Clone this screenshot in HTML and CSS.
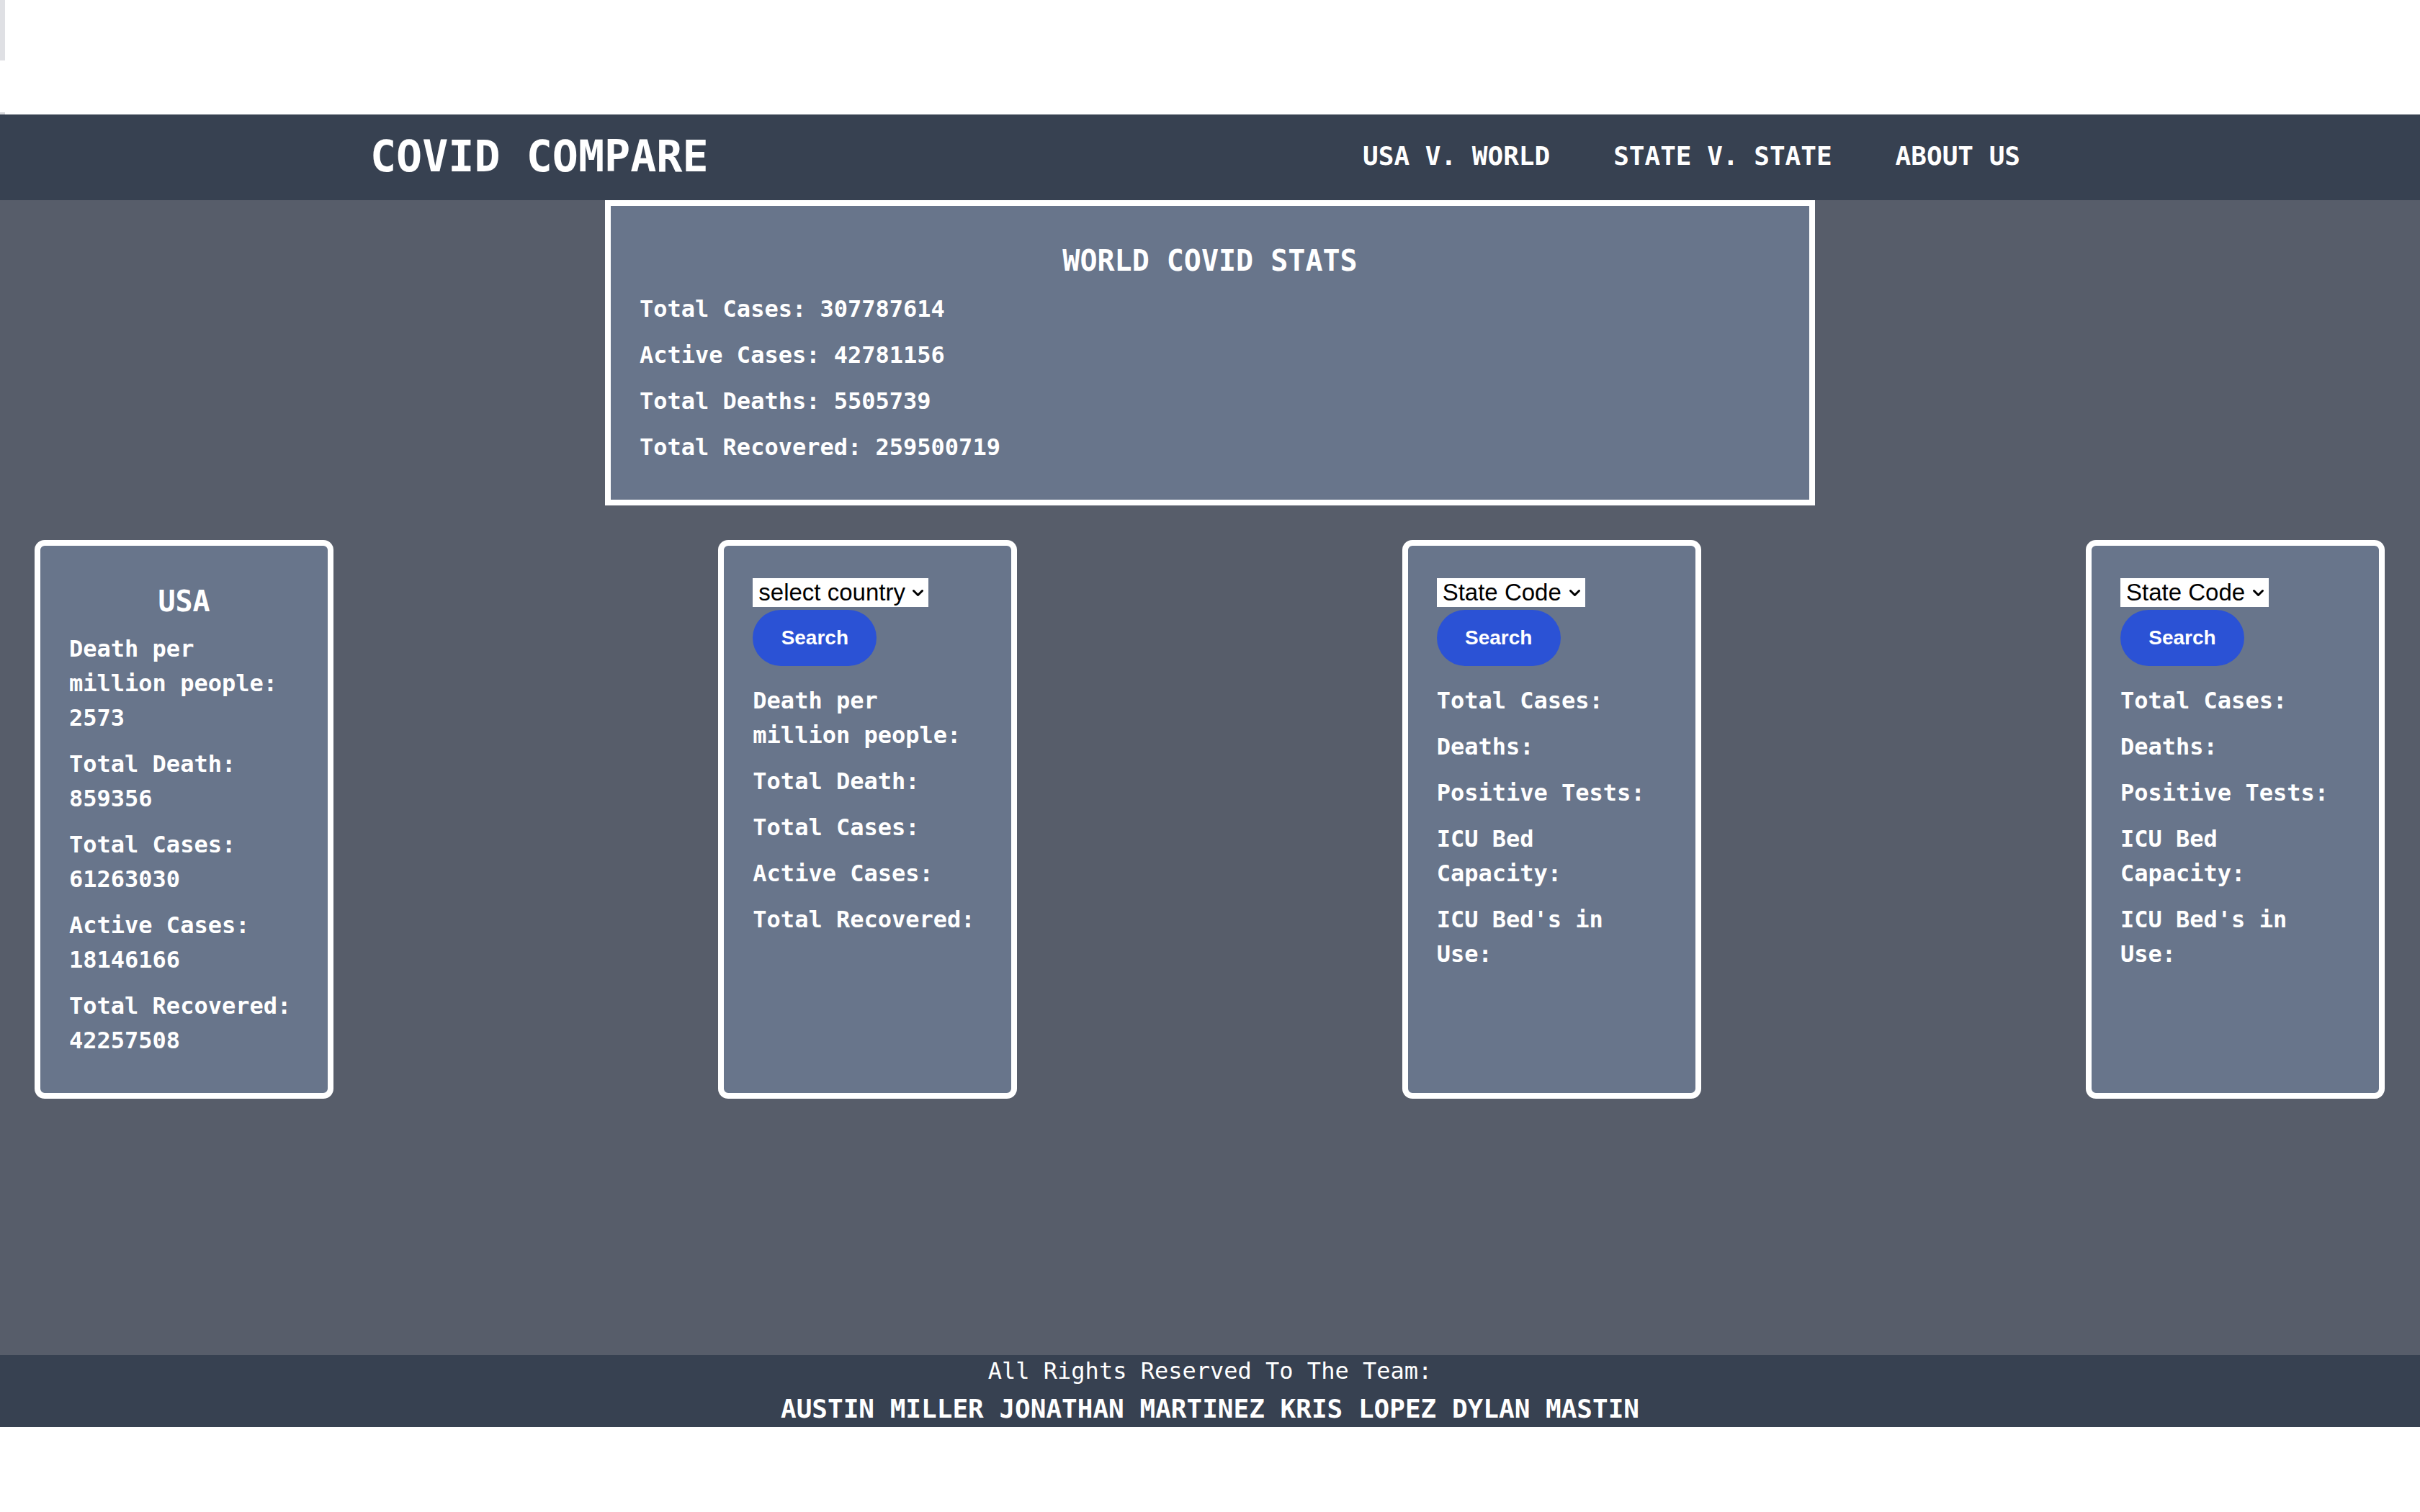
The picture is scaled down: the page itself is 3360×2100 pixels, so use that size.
FILE: index.html
```html
<!DOCTYPE html>
<html lang="en">
<head>
<meta charset="utf-8">
<title>Covid Compare</title>
<link rel="stylesheet" href="styles.css">
</head>
<body>
<div class="topbar">
  <span class="strip"></span>
  <span class="strip-small"></span>
</div>
<header class="site-header">
  <h1 class="brand">COVID COMPARE</h1>
  <nav class="nav">
    <a class="nav-link" href="#">USA V. WORLD</a>
    <a class="nav-link" href="#">STATE V. STATE</a>
    <a class="nav-link" href="#">ABOUT US</a>
  </nav>
</header>
<main class="main">
  <section class="world">
    <h2 class="world-title">WORLD COVID STATS</h2>
    <p class="stat">Total Cases: 307787614</p>
    <p class="stat">Active Cases: 42781156</p>
    <p class="stat">Total Deaths: 5505739</p>
    <p class="stat">Total Recovered: 259500719</p>
  </section>
  <div class="cards">
    <section class="card">
      <h3 class="card-title">USA</h3>
      <p class="line">Death per million people: 2573</p>
      <p class="line">Total Death: 859356</p>
      <p class="line">Total Cases: 61263030</p>
      <p class="line">Active Cases: 18146166</p>
      <p class="line">Total Recovered: 42257508</p>
    </section>
    <section class="card">
      <div class="select-wrap">
        <select class="picker"><option>select country</option></select>
        <svg class="chev" width="17" height="11" viewBox="0 0 17 11"><path d="M2.5 2.5 L8.5 8.5 L14.5 2.5" stroke="#000" stroke-width="3" fill="none" stroke-linecap="round" stroke-linejoin="round"/></svg>
      </div>
      <button class="search" type="button">Search</button>
      <p class="line">Death per million people:</p>
      <p class="line">Total Death:</p>
      <p class="line">Total Cases:</p>
      <p class="line">Active Cases:</p>
      <p class="line">Total Recovered:</p>
    </section>
    <section class="card">
      <div class="select-wrap">
        <select class="picker"><option>State Code</option></select>
        <svg class="chev" width="17" height="11" viewBox="0 0 17 11"><path d="M2.5 2.5 L8.5 8.5 L14.5 2.5" stroke="#000" stroke-width="3" fill="none" stroke-linecap="round" stroke-linejoin="round"/></svg>
      </div>
      <button class="search" type="button">Search</button>
      <p class="line">Total Cases:</p>
      <p class="line">Deaths:</p>
      <p class="line">Positive Tests:</p>
      <p class="line">ICU Bed Capacity:</p>
      <p class="line">ICU Bed's in Use:</p>
    </section>
    <section class="card">
      <div class="select-wrap">
        <select class="picker"><option>State Code</option></select>
        <svg class="chev" width="17" height="11" viewBox="0 0 17 11"><path d="M2.5 2.5 L8.5 8.5 L14.5 2.5" stroke="#000" stroke-width="3" fill="none" stroke-linecap="round" stroke-linejoin="round"/></svg>
      </div>
      <button class="search" type="button">Search</button>
      <p class="line">Total Cases:</p>
      <p class="line">Deaths:</p>
      <p class="line">Positive Tests:</p>
      <p class="line">ICU Bed Capacity:</p>
      <p class="line">ICU Bed's in Use:</p>
    </section>
  </div>
</main>
<footer class="site-footer">
  <p class="credit">All Rights Reserved To The Team:</p>
  <p class="team">AUSTIN MILLER JONATHAN MARTINEZ KRIS LOPEZ DYLAN MASTIN</p>
</footer>
</body>
</html>
```
FILE: styles.css
```css
* { box-sizing: border-box; }

html, body {
  margin: 0;
  padding: 0;
  background: #ffffff;
}

body {
  font-family: "DejaVu Sans Mono", "Liberation Mono", monospace;
  color: #ffffff;
}

.topbar {
  height: 159px;
  display: flex;
  flex-direction: column;
  justify-content: space-between;
}

.strip {
  display: block;
  width: 7px;
  height: 84px;
  background: #dfe0e4;
}

.strip-small {
  display: block;
  width: 7px;
  height: 3px;
  background: #d6d7db;
}

.site-header {
  height: 119px;
  background: #374151;
  display: flex;
  align-items: center;
  justify-content: space-between;
  padding: 0 555px 0 514px;
}

.brand {
  margin: 0 0 4px 0;
  font-size: 60px;
  line-height: 72px;
  font-weight: bold;
  color: #ffffff;
}

.nav {
  display: flex;
  gap: 88px;
  margin-bottom: 4px;
}

.nav-link {
  font-size: 36px;
  line-height: 54px;
  font-weight: bold;
  color: #ffffff;
  text-decoration: none;
}

.main {
  background: #575d6a;
  min-height: 1604px;
}

.world {
  width: 1680px;
  margin: 0 auto;
  border: 8px solid #ffffff;
  background: #68758b;
  padding: 48px 40px 49px;
}

.world-title {
  margin: 0 0 15px;
  text-align: center;
  font-size: 40px;
  line-height: 56px;
  font-weight: bold;
}

.stat {
  margin: 0 0 16px;
  font-size: 32px;
  line-height: 48px;
  font-weight: bold;
}

.stat:last-child { margin-bottom: 0; }

.cards {
  margin-top: 48px;
  padding: 0 49px 0 48px;
  display: flex;
  justify-content: space-between;
  align-items: stretch;
}

.card {
  width: 415px;
  background: #68758b;
  border: 8px solid #ffffff;
  border-radius: 14px;
  padding: 45px 40px 49px;
  display: flex;
  flex-direction: column;
  align-items: stretch;
}

.card-title {
  margin: 4px 0 14px;
  text-align: center;
  font-size: 40px;
  line-height: 56px;
  font-weight: bold;
}

.line {
  margin: 0 0 16px;
  font-size: 32px;
  line-height: 48px;
  font-weight: bold;
}

.line:last-child { margin-bottom: 0; }

.select-wrap {
  position: relative;
  align-self: flex-start;
  height: 40px;
}

.picker {
  -webkit-appearance: none;
  appearance: none;
  display: block;
  height: 40px;
  margin: 0;
  border: 0;
  border-radius: 0;
  background: #ffffff;
  color: #000000;
  font-family: "Liberation Sans", Arial, sans-serif;
  font-size: 33px;
  line-height: 40px;
  padding: 0 32px 0 8px;
}

.chev {
  position: absolute;
  right: 6px;
  top: 15px;
  pointer-events: none;
}

.search {
  align-self: flex-start;
  width: 172px;
  height: 78px;
  margin: 4px 0 24px;
  border: 0;
  border-radius: 9999px;
  background: #2b52d5;
  color: #ffffff;
  font-family: "Liberation Sans", Arial, sans-serif;
  font-size: 28px;
  font-weight: bold;
  padding: 0;
}

.site-footer {
  background: #374151;
  height: 100px;
  text-align: center;
}

.credit {
  margin: 0;
  font-size: 32px;
  line-height: 44px;
  font-weight: normal;
}

.team {
  margin: 5px 0 0;
  font-size: 36px;
  line-height: 51px;
  font-weight: bold;
}
```
